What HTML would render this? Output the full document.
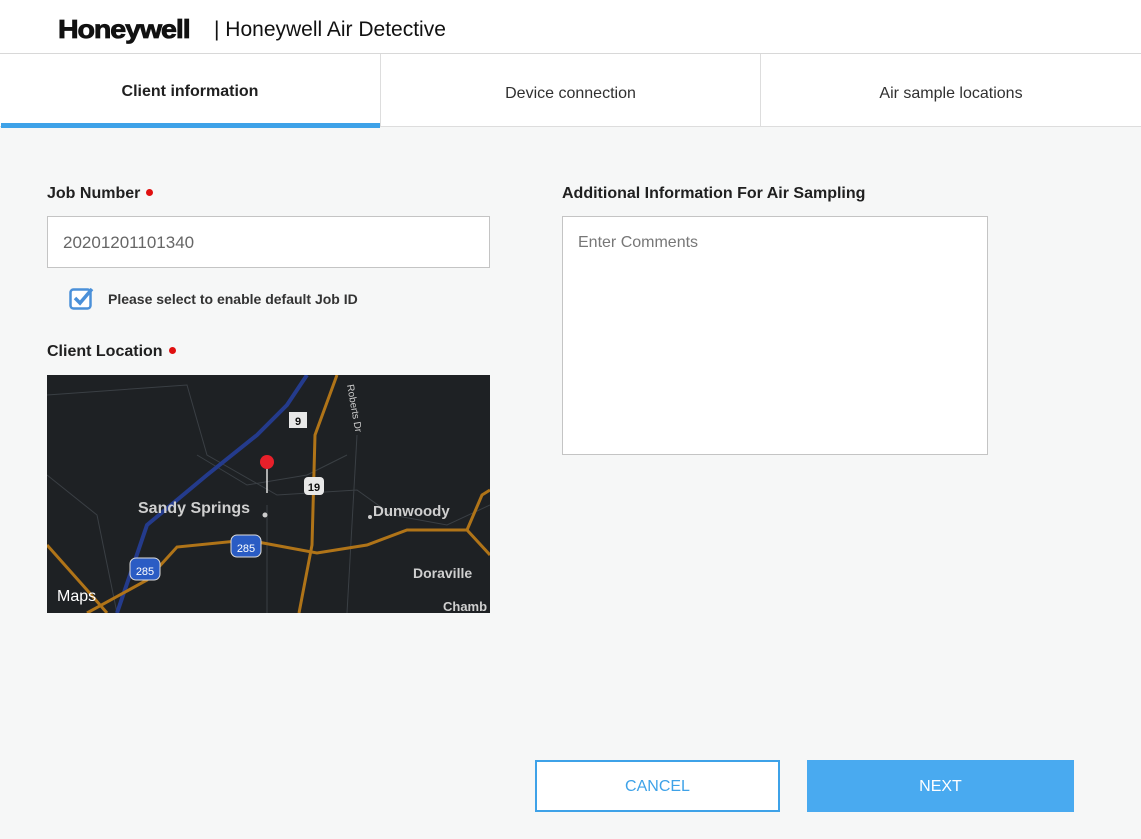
<!DOCTYPE html>
<html><head><meta charset="utf-8"><style>
*{margin:0;padding:0;box-sizing:border-box}
body{width:1141px;height:839px;background:#f6f7f7;font-family:"Liberation Sans",sans-serif;position:relative;overflow:hidden;color:#202020}
.hdr{position:absolute;left:0;top:0;width:1141px;height:54px;background:#fff;border-bottom:1px solid #d8d8d8}
.logo{position:absolute;left:58px;top:14px;font-size:26px;font-weight:bold;letter-spacing:-1px;color:#111;transform:scaleX(1.1);transform-origin:left;-webkit-text-stroke:0.8px #111}
.title{position:absolute;left:214px;top:18px;font-size:21px;color:#111}
.tabs{position:absolute;top:54px;left:0;width:1141px;height:73px;background:#fff;border-bottom:1px solid #ddd}
.tab{position:absolute;top:0;height:73px;text-align:center;font-size:16px;border-left:1px solid #ddd}
.abs{position:absolute}
.lbl{font-size:16px;font-weight:bold;color:#202020}
.dot{display:inline-block;width:7px;height:7px;border-radius:50%;background:#e01010;margin-left:6px;vertical-align:2px}
</style></head><body>
<div class="hdr"><div class="logo">Honeywell</div><div class="title">| Honeywell Air Detective</div></div>
<div class="tabs">
<div class="tab" style="left:0;width:380px;border-left:none;font-weight:bold;line-height:76px;">Client information<div style="position:absolute;left:1px;right:0;bottom:-1px;height:5px;background:#3ea2e8"></div></div>
<div class="tab" style="left:380px;width:380px;line-height:80px;color:#303030">Device connection</div>
<div class="tab" style="left:760px;width:381px;line-height:80px;color:#303030">Air sample locations</div>
</div>
<div class="abs lbl" style="left:47px;top:185px">Job Number<span class="dot"></span></div>
<div class="abs" style="left:47px;top:216px;width:443px;height:52px;background:#fff;border:1px solid #c4c4c4;font-size:17px;color:#666;padding:16px 0 0 15px">20201201101340</div>
<svg class="abs" style="left:69px;top:286px" width="26" height="24"><rect x="1.5" y="3.5" width="20" height="19" rx="3" fill="#fff" stroke="#4a90d9" stroke-width="2.5"/><path d="M6 12l5 5 12-14" fill="none" stroke="#4a90d9" stroke-width="3.5"/></svg>
<div class="abs" style="left:108px;top:291px;font-size:14px;font-weight:bold;color:#333">Please select to enable default Job ID</div>
<div class="abs lbl" style="left:47px;top:343px">Client Location<span class="dot"></span></div>
<svg class="abs" style="left:47px;top:375px" width="443" height="238" viewBox="0 0 443 238">
<rect width="443" height="238" fill="#1e2124"/>
<g fill="none" stroke="#3a3f44" stroke-width="1"><path d="M0 20 L140 10 L160 80 L230 120 L310 115 L345 140 L400 150 L443 130"/><path d="M150 80 L200 110 L260 100 L300 80"/><path d="M220 130 L220 238"/><path d="M0 100 L50 140 L70 238"/><path d="M310 60 L300 238"/></g>
<path d="M70 238 L100 150 L160 100 L210 60 L240 30 L260 0" fill="none" stroke="#243b8c" stroke-width="4"/>
<path d="M0 170 L40 215 L60 238" fill="none" stroke="#b07418" stroke-width="3"/>
<path d="M40 238 L100 205 L130 172 L200 165 L270 178 L320 170 L360 155 L420 155 L443 180" fill="none" stroke="#b07418" stroke-width="3"/>
<path d="M252 238 L265 170 L268 60 L290 0" fill="none" stroke="#b07418" stroke-width="3"/>
<path d="M420 155 L435 120 L443 115" fill="none" stroke="#b07418" stroke-width="3"/>
<rect x="242" y="37" width="18" height="16" fill="#e8e8e8"/><text x="251" y="50" font-size="11" font-weight="bold" text-anchor="middle" fill="#111">9</text>
<rect x="257" y="102" width="20" height="18" rx="4" fill="#e8e8e8"/><text x="267" y="116" font-size="11" font-weight="bold" text-anchor="middle" fill="#111">19</text>
<rect x="184" y="160" width="30" height="22" rx="6" fill="#2a5cc4" stroke="#ddd"/><text x="199" y="177" font-size="11" text-anchor="middle" fill="#fff">285</text>
<rect x="83" y="183" width="30" height="22" rx="6" fill="#2a5cc4" stroke="#ddd"/><text x="98" y="200" font-size="11" text-anchor="middle" fill="#fff">285</text>
<line x1="220" y1="92" x2="220" y2="118" stroke="#ddd" stroke-width="1.5"/><circle cx="220" cy="87" r="7" fill="#e8202a"/>
<text x="91" y="138" font-size="16" font-weight="bold" fill="#cfcfcf">Sandy Springs</text><circle cx="218" cy="140" r="2.5" fill="#ccc"/>
<text x="326" y="141" font-size="15" font-weight="bold" fill="#cfcfcf">Dunwoody</text><circle cx="323" cy="142" r="2" fill="#ccc"/>
<text x="366" y="203" font-size="14" font-weight="bold" fill="#cfcfcf">Doraville</text>
<text x="396" y="236" font-size="13" font-weight="bold" fill="#cfcfcf">Chamb</text>
<text x="300" y="10" font-size="10" fill="#ccc" transform="rotate(80 300 10)">Roberts Dr</text>
<text x="10" y="226" font-size="16" fill="#fff"> Maps</text>
</svg>
<div class="abs lbl" style="left:562px;top:185px">Additional Information For Air Sampling</div>
<div class="abs" style="left:562px;top:216px;width:426px;height:239px;background:#fff;border:1px solid #c4c4c4;font-size:16px;color:#777;padding:17px 0 0 15px">Enter Comments</div>
<div class="abs" style="left:535px;top:760px;width:245px;height:52px;background:#fff;border:2px solid #3ea2e8;color:#3ea2e8;font-size:16px;text-align:center;line-height:50px">CANCEL</div>
<div class="abs" style="left:807px;top:760px;width:267px;height:52px;background:#49aaf0;color:#fff;font-size:16px;text-align:center;line-height:54px">NEXT</div>
</body></html>
